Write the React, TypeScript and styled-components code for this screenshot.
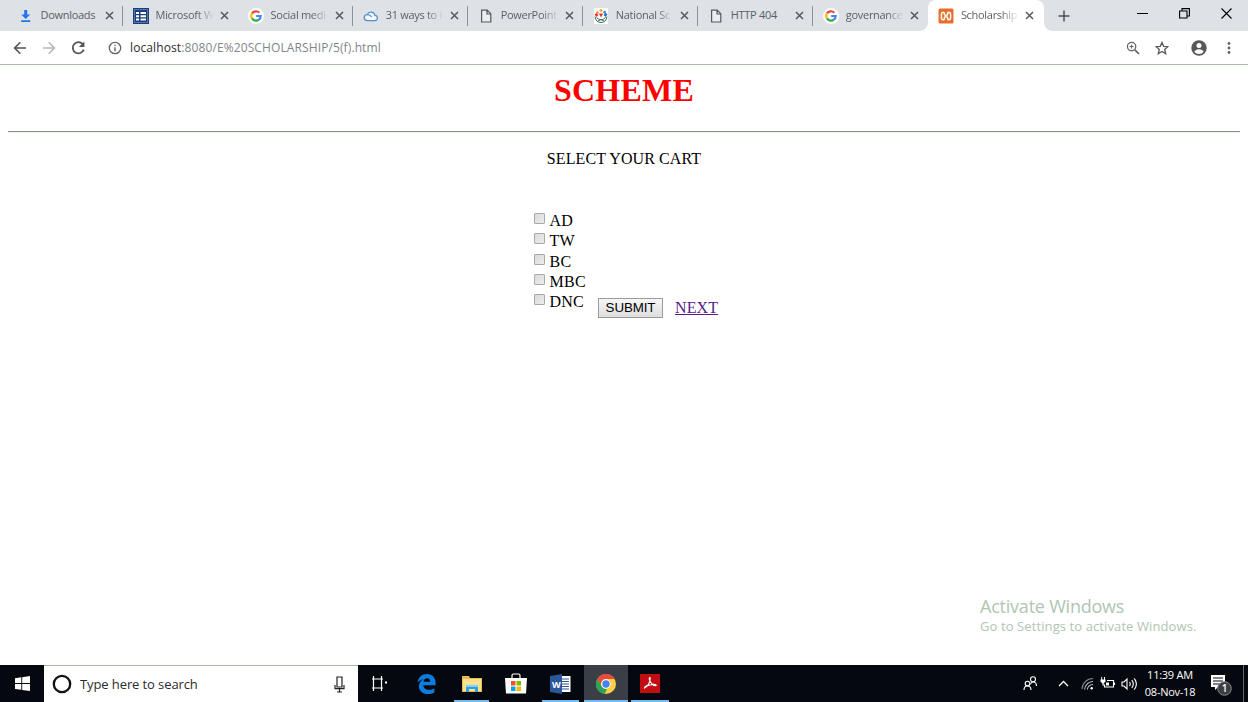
import React from "react";
import styled, { createGlobalStyle, css } from "styled-components";

const Global = createGlobalStyle`
  * { box-sizing: border-box; }
  body { margin: 0; background: #fff; overflow: hidden; }
`;

const ui = `"Open Sans", "Noto Sans", sans-serif`;
const serif = `"Liberation Serif", serif`;

const Screen = styled.div`
  width: 1248px;
  height: 702px;
  display: flex;
  flex-direction: column;
  overflow: hidden;
  background: #fff;
`;

/* Browser chrome */
const TabStrip = styled.div`
  height: 31px;
  flex: none;
  display: flex;
  background: #dee1e6;
  padding-left: 8px;
`;

const TabBox = styled.div<{ $active?: boolean; $line?: boolean }>`
  position: relative;
  width: 115.05px;
  height: 31px;
  flex: none;
  display: flex;
  align-items: center;
  padding-left: 10px;
  ${(p) =>
    p.$line &&
    css`
      &::after {
        content: "";
        position: absolute;
        right: 0;
        top: 6px;
        width: 1px;
        height: 20px;
        background: #8f9296;
      }
    `}
  ${(p) =>
    p.$active &&
    css`
      background: #fff;
      width: 116px;
      border-radius: 8px 8px 0 0;
      &::before,
      &::after {
        content: "";
        position: absolute;
        bottom: 0;
        width: 8px;
        height: 8px;
      }
      &::before {
        left: -8px;
        background: radial-gradient(circle at 0 0, #dee1e6 7.5px, #fff 8px);
      }
      &::after {
        right: -8px;
        background: radial-gradient(circle at 100% 0, #dee1e6 7.5px, #fff 8px);
      }
    `}
`;

const TabIcon = styled.span`
  width: 16px;
  height: 16px;
  display: flex;
  flex: none;
`;

const TabTitle = styled.span<{ $fade?: boolean }>`
  width: 58px;
  margin: -1px 0 0 6.5px;
  flex: none;
  overflow: hidden;
  white-space: nowrap;
  font: 11px/16px ${ui};
  letter-spacing: -0.3px;
  color: #5c5f64;
  ${(p) => p.$fade && css`mask-image: linear-gradient(90deg, #000 70%, transparent 100%);`}
`;

const CloseIcon = styled.svg`
  width: 9px;
  height: 9px;
  margin-left: 6px;
  flex: none;
`;

const NewTab = styled.div`
  width: 40px;
  display: flex;
  align-items: center;
  justify-content: center;
`;

const WindowButtons = styled.div`
  margin-left: auto;
  display: flex;
  align-items: center;
  height: 26px;
  gap: 31px;
  padding-right: 16px;
  svg { display: block; }
`;

const AddressBar = styled.div`
  height: 34px;
  flex: none;
  display: flex;
  align-items: center;
  padding: 0 11px 0 12px;
  border-bottom: 1px solid #a9baa9;
  background: #fff;
`;

const NavIcons = styled.div`
  display: flex;
  gap: 13px;
  margin-right: 22px;
`;

const Url = styled.div`
  margin-left: 8px;
  font: 12px/18px ${ui};
  letter-spacing: 0.11px;
  color: #80868b;
  b { font-weight: 400; color: #2b2d30; }
`;

const ToolIcons = styled.div`
  margin-left: auto;
  display: flex;
  align-items: center;
`;

const Gap = styled.span<{ $w: number }>`
  width: ${(p) => p.$w}px;
  flex: none;
`;

/* Web page */
const Page = styled.main`
  height: 600px;
  flex: none;
  display: flex;
  flex-direction: column;
  align-items: center;
  font: 16px/18px ${serif};
  color: #000;
`;

const Heading = styled.h1`
  margin: 7px 0 0;
  font: bold 32px/37px ${serif};
  letter-spacing: 0.2px;
  color: #f00;
`;

const Rule = styled.hr`
  width: 1232px;
  height: 2px;
  margin: 22px 0 0;
  border: 0;
  border-top: 1px solid #829487;
  border-bottom: 1px solid #eef3ee;
`;

const Prompt = styled.p`
  margin: 17px 0 0;
  letter-spacing: 0.1px;
`;

const Form = styled.form`
  display: flex;
  width: 186px;
  margin-top: 43px;
  margin-left: 6px;
  align-items: flex-start;
`;

const Options = styled.div`
  width: 64px;
  display: grid;
  grid-template-rows: 20px 21px 20px 20px 20px;
`;

const Option = styled.label`
  display: flex;
  align-items: flex-start;
  gap: 4.5px;
  line-height: 20px;
  letter-spacing: 0.25px;
`;

const Check = styled.input`
  appearance: none;
  width: 11px;
  height: 11px;
  margin: 2px 0 0;
  border: 1px solid #a8aaa8;
  border-radius: 1px;
  background: linear-gradient(135deg, #dadada, #ececec);
`;

const Submit = styled.button`
  width: 65px;
  height: 20px;
  flex: none;
  margin: 87px 12px 0 0;
  padding: 0;
  border: 1px solid #9a9c9a;
  background: linear-gradient(#f6f6f6, #dedede);
  font: 13.33px/18px "Liberation Sans", sans-serif;
  letter-spacing: -0.1px;
  color: #000;
`;

const Next = styled.a`
  margin-top: 88px;
  line-height: 18px;
  letter-spacing: 0.1px;
  color: #551a8b;
  text-decoration: underline;
`;

const Watermark = styled.div`
  width: 268px;
  margin: auto 0 30px auto;
  color: #b0c5b2;
  font-family: ${ui};
`;

const WatermarkTitle = styled.div`
  font-size: 18px;
  line-height: 22px;
  letter-spacing: -0.22px;
`;

const WatermarkNote = styled.div`
  font-size: 13px;
  line-height: 18px;
  letter-spacing: 0.1px;
  white-space: nowrap;
`;

/* Taskbar */
const Taskbar = styled.footer`
  height: 37px;
  flex: none;
  display: flex;
  background: #05080e;
  color: #fff;
  font-family: ${ui};
`;

const Slot = styled.div<{ $w: number; $active?: boolean; $open?: boolean }>`
  position: relative;
  width: ${(p) => p.$w}px;
  flex: none;
  display: flex;
  align-items: center;
  justify-content: center;
  background: ${(p) => (p.$active ? "#3a3e45" : "transparent")};
  ${(p) =>
    p.$open &&
    css`
      &::after {
        content: "";
        position: absolute;
        bottom: 0;
        left: ${p.$active ? 0 : 3}px;
        right: ${p.$active ? 0 : 3}px;
        height: 2px;
        background: #76b9ed;
      }
    `}
`;

const Search = styled.div`
  width: 314px;
  flex: none;
  display: flex;
  align-items: center;
  padding: 0 12px 0 8px;
  background: #fff;
  border-top: 1px solid #a9baa9;
  color: #2b2b2b;
`;

const SearchText = styled.span`
  margin: 0 auto 0 8px;
  font-size: 13px;
  letter-spacing: -0.1px;
`;

const Tray = styled.div`
  margin-left: auto;
  display: flex;
  align-items: center;
`;

const Clock = styled.div`
  width: 60px;
  margin: -2px 9px 0 0;
  text-align: center;
  font-size: 11px;
  line-height: 17px;
  letter-spacing: -0.25px;
  white-space: nowrap;
`;

const ShowDesktop = styled.div`
  width: 5px;
  height: 37px;
  border-left: 1px solid #62666b;
`;

const icons: Record<string, React.ReactNode> = {
  download: (
    <svg width="16" height="16" viewBox="0 0 16 16" fill="#2475e8">
      <path d="M6.2 2h3v4.4h3L7.7 11 3.2 6.4h3zM3.2 12.3h9v1.6h-9z" />
    </svg>
  ),
  grid: (
    <svg width="16" height="16" viewBox="0 0 16 16">
      <path fill="#1d3d78" d="M0 0h16v16H0z" />
      <path fill="#4f78b0" d="M1 1h14v1H1zM1 14h14v1H1zM1 1h1v14H1zM14 1h1v14h-1z" />
      <path fill="#fff" d="M3 4h3v2H3zM7.5 4H13v2H7.5zM3 7.2h3v2H3zM7.5 7.2H13v2H7.5zM3 10.5h3v2H3zM7.5 10.5H13v2H7.5z" />
    </svg>
  ),
  google: (
    <svg width="16" height="16" viewBox="0 0 16 16">
      <circle cx="8" cy="8" r="8" fill="#fff" />
      <g fill="none" strokeWidth="2.2">
        <path d="M4 5.4A4.7 4.7 0 0 1 11.3 4.7" stroke="#ea4335" />
        <path d="M4 5.4A4.7 4.7 0 0 0 4 10.5" stroke="#fbbc05" />
        <path d="M4 10.4A4.7 4.7 0 0 0 10.9 11.7" stroke="#34a853" />
        <path d="M10.9 11.7A4.7 4.7 0 0 0 12.7 8H8.2" stroke="#4285f4" />
      </g>
    </svg>
  ),
  cloud: (
    <svg width="16" height="16" viewBox="0 0 16 16" fill="#f4f9ff" stroke="#568fc8" strokeWidth="1.3">
      <path d="M4.2 12.6h7.5a2.6 2.6 0 0 0 .2-5.2A4 4 0 0 0 4.3 6.6 3 3 0 0 0 4.2 12.6Z" />
      <path d="M4.3 6.6Q7 6.4 8.7 9" fill="none" />
    </svg>
  ),
  file: (
    <svg width="16" height="16" viewBox="0 0 16 16" fill="#eceef0" stroke="#55585c" strokeWidth="1.2">
      <path d="M3.6 2.1H9.2L12.8 5.7V14H3.6ZM9 2.3V6H12.6" />
    </svg>
  ),
  national: (
    <svg width="16" height="16" viewBox="0 0 16 16">
      <path fill="#fff" d="M1 0h14v16H1z" />
      <path d="M2 8.5q.8 6 6 6t6-6M3.5 9.5q4.500 4.500 9 0M5 13q3-3 6 0" stroke="#38705d" strokeWidth="1" fill="none" />
      <path fill="#f2b630" d="M8 .5l2 2-2 2-2-2z" />
      <path fill="#f08a24" d="M4 3l2 1-1 2-2-1z" />
      <path fill="#e83737" d="M1.500 6.500l2-1.500 2 2-2 2z" />
      <path fill="#2475c8" d="M10.500 7l2-2.500 2 2-2 2.500zM10 4l2-1.500L13 4l-2 1.500z" />
      <path fill="#e83737" d="M5.800 5.500h4.400L8 9.500z" />
    </svg>
  ),
  xampp: (
    <svg width="16" height="16" viewBox="0 0 16 16">
      <rect x=".5" y=".5" width="15" height="15" rx="1.5" fill="#e5702a" />
      <g fill="none" stroke="#fff" strokeWidth="1.5">
        <path d="M6 6l4 4M10 6l-4 4" />
        <path d="M6.500 6.500Q6.500 4.200 5 4.200T3.400 6v4q0 1.800 1.600 1.800T6.500 9.500M9.500 6.500Q9.500 4.200 11 4.200T12.600 6v4q0 1.800-1.600 1.800T9.500 9.500" />
      </g>
    </svg>
  ),
};

type TabData = { icon: string; title: string; fade?: boolean; line?: boolean; active?: boolean };

const tabs: TabData[] = [
  { icon: "download", title: "Downloads", line: true },
  { icon: "grid", title: "Microsoft W", fade: true },
  { icon: "google", title: "Social medi", fade: true, line: true },
  { icon: "cloud", title: "31 ways to i", fade: true, line: true },
  { icon: "file", title: "PowerPoint", fade: true, line: true },
  { icon: "national", title: "National Sc", fade: true, line: true },
  { icon: "file", title: "HTTP 404", line: true },
  { icon: "google", title: "governance", fade: true },
  { icon: "xampp", title: "Scholarship", fade: true, active: true },
];

const Tab = ({ icon, title, fade, line, active }: TabData) => (
  <TabBox $active={active} $line={line}>
    <TabIcon>{icons[icon]}</TabIcon>
    <TabTitle $fade={fade}>{title}</TabTitle>
    <CloseIcon viewBox="0 0 9 9"><path d="M1 1l7 7M8 1L1 8" stroke="#56595d" strokeWidth="1.5" /></CloseIcon>
  </TabBox>
);

const options = ["AD", "TW", "BC", "MBC", "DNC"];

export default function App() {
  return (
    <Screen>
      <Global />
      <TabStrip>
        {tabs.map((t, i) => <Tab key={i} {...t} />)}
        <NewTab>
          <svg width="12" height="12" viewBox="0 0 12 12"><path d="M6 .5v11M.5 6h11" stroke="#4d5054" strokeWidth="1.5" /></svg>
        </NewTab>
        <WindowButtons>
          <svg width="11" height="11"><path d="M0 5.500h11" stroke="#000" /></svg>
          <svg width="11" height="11" fill="none" stroke="#000" strokeWidth="1.1"><path d="M.6 3h7.400v7H.6zM3 3V.6h7.400v7.400H8" /></svg>
          <svg width="11" height="11"><path d="M.5.5l10 10M10.500.5l-10 10" stroke="#000" strokeWidth="1.1" /></svg>
        </WindowButtons>
      </TabStrip>
      <AddressBar>
        <NavIcons>
          <svg width="16" height="16" viewBox="0 0 16 16" fill="none" stroke="#505357" strokeWidth="1.600"><path d="M14 8H3M8.300 2.300L2.600 8l5.700 5.700" /></svg>
          <svg width="16" height="16" viewBox="0 0 16 16" fill="none" stroke="#b6b8ba" strokeWidth="1.600"><path d="M2 8h11M7.700 2.300L13.400 8l-5.700 5.700" /></svg>
          <svg width="16" height="16" viewBox="0 0 16 16"><path d="M12.600 4.100A5.600 5.600 0 1 0 13.700 9.600" fill="none" stroke="#505357" strokeWidth="1.800" /><path d="M14.400 1.500V7H8.900z" fill="#505357" /></svg>
        </NavIcons>
        <svg width="14" height="14" viewBox="0 0 14 14"><circle cx="7" cy="7" r="5.700" fill="none" stroke="#5f6368" strokeWidth="1.300" /><path d="M6.300 6.200h1.400v4H6.300zM6.300 3.700h1.400v1.400H6.300z" fill="#5f6368" /></svg>
        <Url><b>localhost</b>:8080/E%20SCHOLARSHIP/5(f).html</Url>
        <ToolIcons>
          <svg width="14" height="14" viewBox="0 0 14 14" fill="none" stroke="#5f6368" strokeWidth="1.300"><circle cx="5.600" cy="5.600" r="4.200" /><path d="M8.800 8.800l4.200 4.200" strokeWidth="1.700" /><path d="M3.500 5.600h4.200M5.600 3.500v4.200" strokeWidth="1" /></svg>
          <Gap $w={15} />
          <svg width="14" height="14" viewBox="0 0 14 14" fill="none" stroke="#55595e" strokeWidth="1.300"><path d="M7 1.400l1.700 3.900 4.200.4-3.200 2.800 1 4.200L7 10.500l-3.700 2.200 1-4.200L1.100 5.700l4.200-.4z" /></svg>
          <Gap $w={22} />
          <svg width="16" height="16" viewBox="0 0 16 16"><circle cx="8" cy="8" r="7.700" fill="#55585c" /><circle cx="8" cy="5.400" r="2.500" fill="#fff" /><path d="M3.300 11.800Q4.500 9.200 8 9.200t4.700 2.600Q11 14 8 14t-4.700-2.200z" fill="#fff" /></svg>
          <Gap $w={20} />
          <svg width="4" height="14" fill="#5f6368"><circle cx="2" cy="2.500" r="1.400" /><circle cx="2" cy="7" r="1.400" /><circle cx="2" cy="11.500" r="1.400" /></svg>
          <Gap $w={6} />
        </ToolIcons>
      </AddressBar>
      <Page>
        <Heading>SCHEME</Heading>
        <Rule />
        <Prompt>SELECT YOUR CART</Prompt>
        <Form onSubmit={(e) => e.preventDefault()}>
          <Options>
            {options.map((o) => <Option key={o}><Check type="checkbox" />{o}</Option>)}
          </Options>
          <Submit>SUBMIT</Submit>
          <Next href="#">NEXT</Next>
        </Form>
        <Watermark>
          <WatermarkTitle>Activate Windows</WatermarkTitle>
          <WatermarkNote>Go to Settings to activate Windows.</WatermarkNote>
        </Watermark>
      </Page>
      <Taskbar>
        <Slot $w={44}>
          <svg width="15" height="15" viewBox="0 0 15 15" fill="#fff"><path d="M0 2.200l6.300-.9v5.800H0zM7.200 1.200L15 0v7.100H7.200zM0 8h6.300v5.800L0 12.900zM7.200 8H15v7l-7.800-1.100z" /></svg>
        </Slot>
        <Search>
          <svg width="20" height="20"><circle cx="10" cy="10" r="8.200" fill="none" stroke="#111" strokeWidth="2.300" /></svg>
          <SearchText>Type here to search</SearchText>
          <svg width="13" height="17" viewBox="0 0 13 17" fill="none" stroke="#222" strokeWidth="1.200"><path d="M4 1h5v10H4zM2 9v3.700h9V9M6.500 13v3M4 16h5" /></svg>
        </Search>
        <Slot $w={44}>
          <svg width="16" height="15" viewBox="0 0 16 15" fill="none" stroke="#fff" strokeWidth="1.200"><path d="M1.500 0v3h8V0M1.500 15v-3h8v3M1.500 3v9M9.500 3v9M0 3h11M0 12h11" /><path d="M13 5.500h2v2h-2z" fill="#fff" stroke="none" /></svg>
        </Slot>
        <Slot $w={49}>
          <svg width="19" height="20" viewBox="0 0 19 20"><path fill="#0b7ce0" d="M.4 8.800C1.300 3 5 0 10 0c5.500 0 8.600 4 8.600 8.700v2.500H6.300c.2 3 2.600 4.600 5.800 4.600 2 0 3.800-.5 5.300-1.400v4.100c-1.800 1-3.900 1.500-6.400 1.500C5 20 1.900 16.400 1.900 12.200 1.900 9 3.700 6.500 6.500 5.200 3.800 5.500 1.700 6.800.4 8.800zM6.500 7.800h6.700c0-2.200-1.100-3.500-3.200-3.500-1.900 0-3.100 1.300-3.500 3.500z" /></svg>
        </Slot>
        <Slot $w={41} $open>
          <svg width="20" height="18" viewBox="0 0 20 18"><path fill="#e9b951" d="M0 1h7l1 2h12v14H0z" /><path fill="#fbe18f" d="M1 4h18v12H1z" /><path fill="#2f9fe0" d="M4 10h12v7h-3v-3H7v3H4z" /><path fill="#7fd0f7" d="M4 10h12v2H4z" /></svg>
        </Slot>
        <Slot $w={47}>
          <svg width="22" height="21" viewBox="0 0 22 21"><path d="M7 5V2.500Q7 1 8.500 1h5Q15 1 15 2.500V5" fill="none" stroke="#fff" strokeWidth="1.200" /><path fill="#fff" d="M0 5h22l-1 15.500H1z" /><path fill="#f25022" d="M6 8h4.500v4.500H6z" /><path fill="#7fba00" d="M11.500 8H16v4.500h-4.500z" /><path fill="#00a4ef" d="M6 13.500h4.500V18H6z" /><path fill="#ffb900" d="M11.500 13.500H16V18h-4.500z" /></svg>
        </Slot>
        <Slot $w={43} $open>
          <svg width="21" height="20" viewBox="0 0 21 20"><path fill="#fff" d="M11 2h9.500v16H11z" /><path d="M12 5h7M12 7.500h7M12 10h7M12 12.500h7M12 15h7" stroke="#2b579a" strokeWidth="1.200" /><path fill="#2b579a" d="M0 2l12-2v20L0 18z" /><text x="2" y="13.500" fill="#fff" fontSize="9" fontWeight="700" fontFamily="Open Sans, sans-serif">W</text></svg>
        </Slot>
        <Gap $w={2} />
        <Slot $w={44} $active $open>
          <svg width="20" height="20" viewBox="0 0 20 20"><circle cx="10" cy="10" r="10" fill="#ffce43" /><path fill="#e74b3c" d="M1.300 5A10 10 0 0 1 18.700 5H10a5 5 0 0 0-4.500 7.200z" /><path fill="#2aa45a" d="M1.300 5L5.700 12.500A5 5 0 0 0 11 15L8.800 19.900A10 10 0 0 1 1.300 5z" /><circle cx="10" cy="10" r="4.700" fill="#fff" /><circle cx="10" cy="10" r="3.700" fill="#4385ed" /></svg>
        </Slot>
        <Slot $w={44} $open>
          <svg width="20" height="19" viewBox="0 0 20 19"><path fill="#c20e12" d="M0 0h20v19H0z" /><path d="M4.500 14c3-1.500 5.800-5.500 5.700-9.500 0-2-1.500-1-.8 1.200 1 3.500 4 6 6.200 6.100 1.500-.2.300-1.800-2.600-1.400-3.600.4-8.500 1.900-8.500 3.600z" fill="none" stroke="#fff" strokeWidth="1.100" /></svg>
        </Slot>
        <Tray>
          <svg width="15" height="15" viewBox="0 0 15 15" fill="none" stroke="#fff" strokeWidth="1.100"><circle cx="4.500" cy="7.500" r="2.300" /><path d="M1 14q0-4 3.500-4T8 14" /><circle cx="10" cy="3.200" r="2.500" /><path d="M7.500 8.300Q8 6 10 6q3.500 0 3.500 4" /></svg>
          <Gap $w={20} />
          <svg width="11" height="7" fill="none" stroke="#fff" strokeWidth="1.300"><path d="M1 6l4.500-4.500L10 6" /></svg>
          <Gap $w={12} />
          <svg width="13" height="13" viewBox="0 0 13 13" fill="none" stroke="#c8cacc" strokeWidth="1.100"><path d="M1 12A11 11 0 0 1 12 1.500" stroke="#85888c" /><path d="M3.600 12.500A8.500 8.500 0 0 1 12 4.500M6.300 12.500A6 6 0 0 1 12 7.500" /><circle cx="10.700" cy="11.300" r="1.200" fill="#fff" stroke="none" /></svg>
          <Gap $w={6} />
          <svg width="16" height="13" viewBox="0 0 16 13" fill="none" stroke="#fff" strokeWidth="1.100"><path d="M7 3.500h6.500v6.500H4.500V7.500M14.500 5.500v2.500" /><path d="M.5 2.500h5v2.300L3 6.800.5 4.800zM1.200 0h1v2.500h-1zM4 0h1v2.500H4z" fill="#fff" stroke="none" /><path d="M3 6v2h1.500" /><path d="M6 5.500h3v3H6z" fill="#fff" stroke="none" /></svg>
          <Gap $w={5} />
          <svg width="17" height="14" viewBox="0 0 17 14" fill="none" stroke="#fff" strokeWidth="1.100"><path d="M1 5h2l3-3v10L3 9H1zM8.500 5q1.500 2 0 4M10.800 3.200q3 3.800 0 7.600M13.200 1.400q4.400 5.600 0 11.200" /></svg>
          <Gap $w={2} />
          <Clock>11:39 AM<br />08-Nov-18</Clock>
          <svg width="24" height="24" viewBox="0 0 24 24"><path fill="#fff" d="M2 3h14v12H9l-3 3v-3H2z" /><path d="M4 6h10M4 9h10M4 12h7" stroke="#05080e" strokeWidth="1.100" /><circle cx="15.500" cy="16.500" r="6.800" fill="#3b3d40" stroke="#85878a" /><text x="15.500" y="20.300" fill="#fff" fontSize="10" fontWeight="600" textAnchor="middle" fontFamily="Open Sans, sans-serif">1</text></svg>
          <Gap $w={10} />
          <ShowDesktop />
        </Tray>
      </Taskbar>
    </Screen>
  );
}
